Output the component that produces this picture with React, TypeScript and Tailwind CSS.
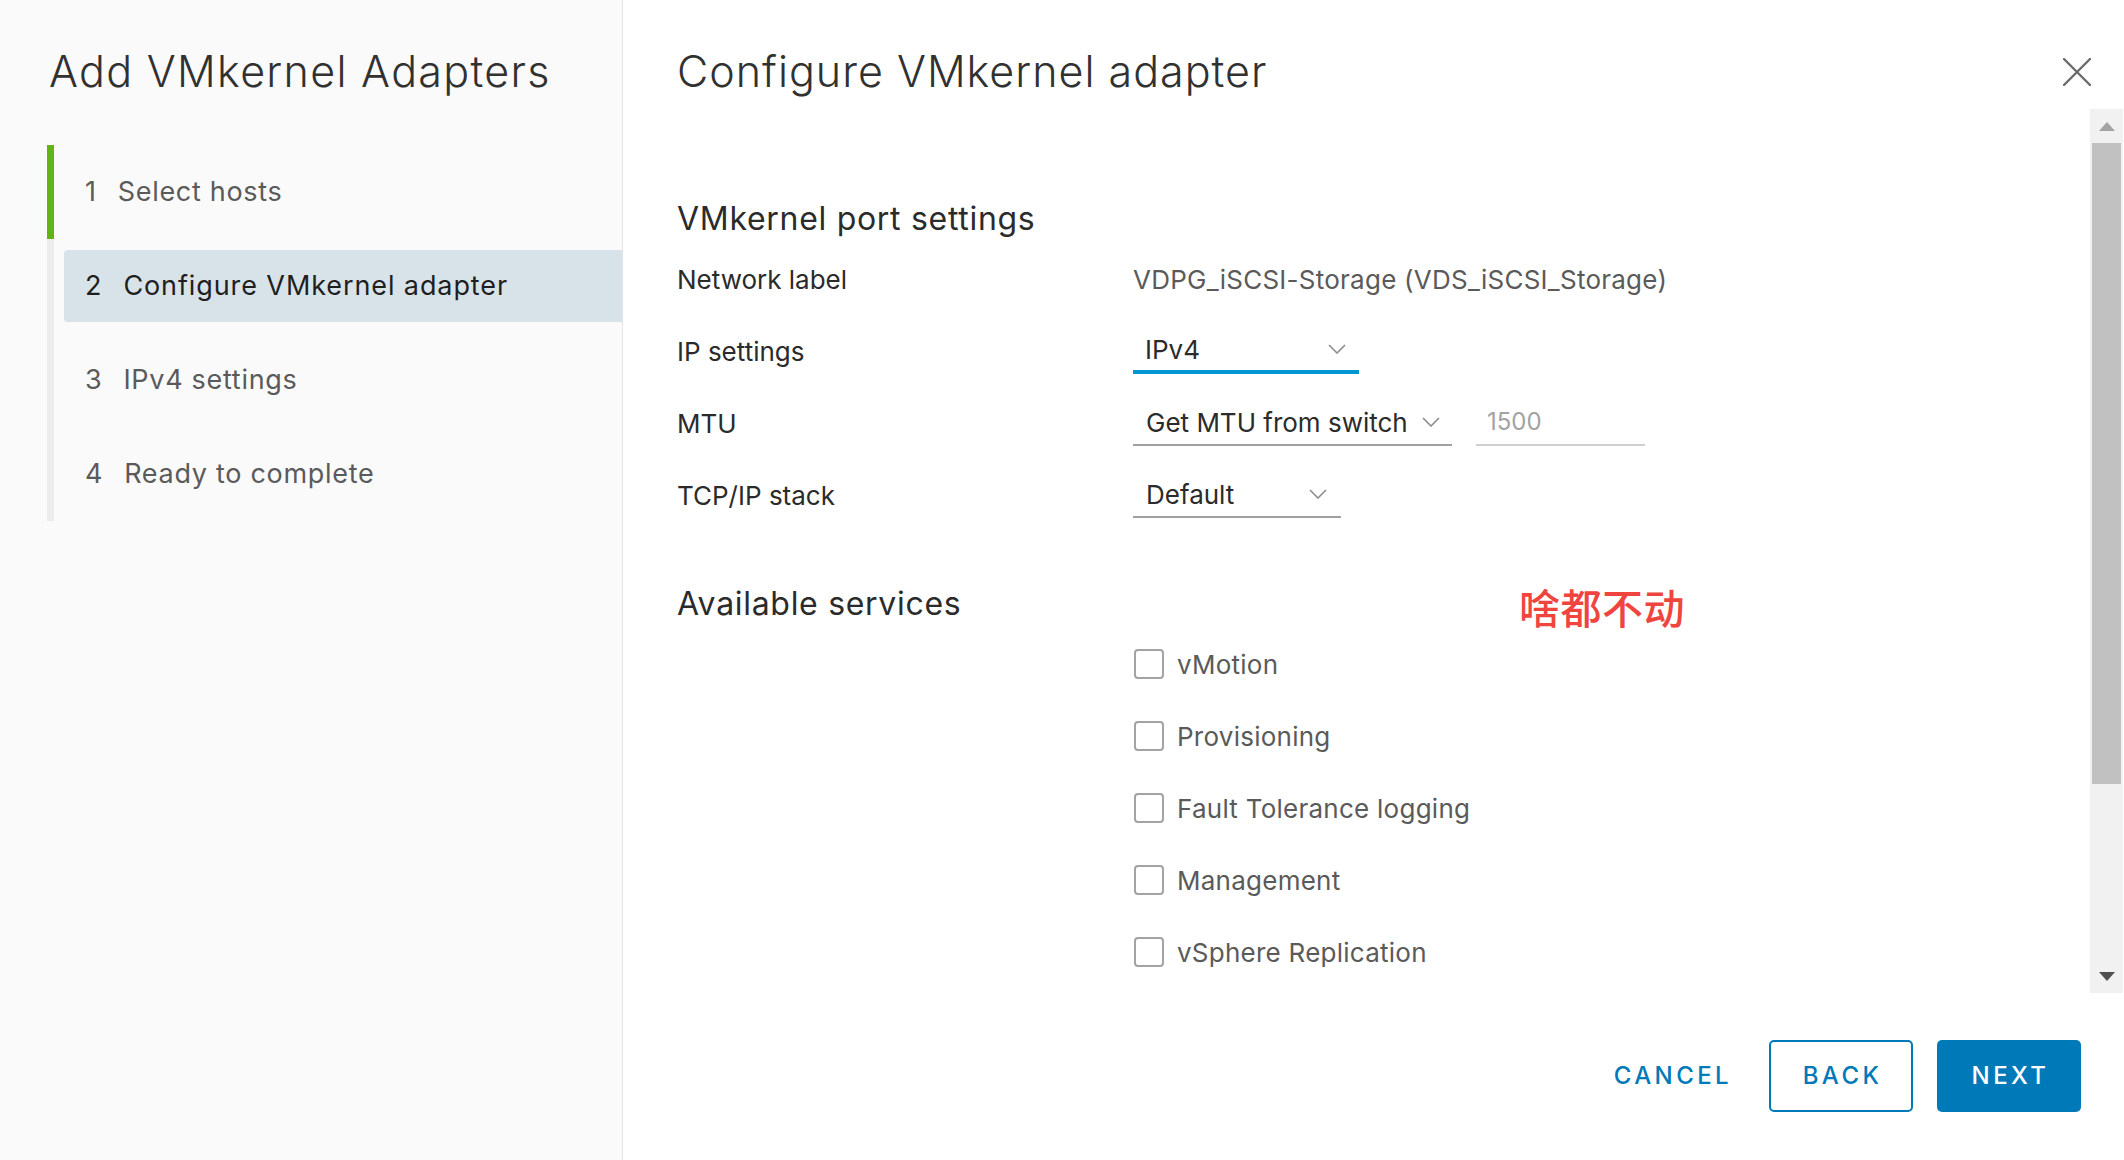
import React from "react";

const Chevron = () => (
  <svg width="18" height="10" viewBox="0 0 18 10" fill="none">
    <polyline points="1,1 9,9 17,1" stroke="#8c8c8c" strokeWidth="1.6" />
  </svg>
);

type StepState = "done" | "active" | "todo";

function Step({ n, label, state }: { n: number; label: string; state: StepState }) {
  return (
    <div className="flex h-[94px]">
      <div className={state === "done" ? "w-[7px] bg-[#60b515]" : "w-[7px] bg-[#ececec]"} />
      <div className="ml-[10px] flex-1 py-[11px]">
        <div
          className={
            state === "active"
              ? "flex h-[72px] items-center rounded-l-[4px] bg-[#d8e3e9] pl-[21px] text-[27px] tracking-[0.9px] text-[#1f1f1f]"
              : "flex h-[72px] items-center rounded-l-[4px] pl-[21px] text-[27px] tracking-[0.7px] text-[#5a5a5a]"
          }
        >
          <span>{n}</span>
          <span className="ml-[21px]">{label}</span>
        </div>
      </div>
    </div>
  );
}

function FormRow({ label, children }: { label: string; children: React.ReactNode }) {
  return (
    <div className="flex h-[72px] items-center">
      <div className="w-[456px] text-[26px] text-[#2b2b2b]">{label}</div>
      {children}
    </div>
  );
}

function Check({ label }: { label: string }) {
  return (
    <div className="flex h-[72px] items-center pl-[457px]">
      <div className="h-[30px] w-[30px] rounded-[4px] border-2 border-[#a3a3a3] bg-white" />
      <span className="ml-[13px] text-[26px] tracking-[0.25px] text-[#5a5a5a]">{label}</span>
    </div>
  );
}

export default function App() {
  return (
    <div className="flex h-[1160px] w-full overflow-hidden bg-white font-['Inter','Noto_Sans',sans-serif]">
      {/* Left panel */}
      <div className="flex h-full w-[623px] shrink-0 flex-col border-r border-[#e4e4e4] bg-[#fafafa]">
        <div className="pl-[49px] pt-[45px] text-[43px] font-light leading-[52px] tracking-[1.3px] text-[#313131]">
          Add VMkernel Adapters
        </div>
        <div className="mt-[48px] pl-[47px]">
          <Step n={1} label="Select hosts" state="done" />
          <Step n={2} label="Configure VMkernel adapter" state="active" />
          <Step n={3} label="IPv4 settings" state="todo" />
          <Step n={4} label="Ready to complete" state="todo" />
        </div>
      </div>

      {/* Right panel */}
      <div className="flex h-full flex-1 flex-col">
        {/* Header */}
        <div className="flex h-[109px] shrink-0 items-start justify-between">
          <div className="pl-[54px] pt-[45px] text-[43px] font-light leading-[52px] tracking-[1px] text-[#313131]">
            Configure VMkernel adapter
          </div>
          <div className="mr-[33px] mt-[58px]">
            <svg width="28" height="28" viewBox="0 0 28 28" fill="none">
              <line x1="1" y1="1" x2="27" y2="27" stroke="#6b6b6b" strokeWidth="2.4" strokeLinecap="round" />
              <line x1="27" y1="1" x2="1" y2="27" stroke="#6b6b6b" strokeWidth="2.4" strokeLinecap="round" />
            </svg>
          </div>
        </div>

        {/* Scroll area */}
        <div className="flex h-[884px] shrink-0">
          <div className="flex-1 overflow-hidden pl-[54px] pt-[86px]">
            <div className="flex h-[48px] items-center text-[32px] tracking-[0.7px] text-[#2b2b2b]">VMkernel port settings</div>

            <FormRow label="Network label">
              <div className="text-[26px] tracking-[0.25px] text-[#5a5a5a]">VDPG_iSCSI-Storage (VDS_iSCSI_Storage)</div>
            </FormRow>

            <FormRow label="IP settings">
              <div className="flex h-[46px] w-[226px] items-center justify-between border-b-4 border-[#0095d3] pl-[12px] pr-[13px] text-[26px] text-[#2b2b2b]">
                <span>IPv4</span>
                <Chevron />
              </div>
            </FormRow>

            <FormRow label="MTU">
              <div className="flex h-[46px] w-[319px] items-center justify-between border-b-2 border-[#a0a0a0] pl-[13px] pr-[12px] text-[26px] text-[#2b2b2b]">
                <span>Get MTU from switch</span>
                <Chevron />
              </div>
              <div className="ml-[24px] flex h-[46px] w-[169px] items-center border-b-2 border-[#d0d0d0] pl-[11px] text-[24px] text-[#a3a3a3]">
                1500
              </div>
            </FormRow>

            <FormRow label="TCP/IP stack">
              <div className="flex h-[46px] w-[208px] items-center justify-between border-b-2 border-[#a0a0a0] pl-[13px] pr-[14px] text-[26px] text-[#2b2b2b]">
                <span>Default</span>
                <Chevron />
              </div>
            </FormRow>

            <div className="mt-[49px] flex h-[48px] items-center">
              <div className="w-[842px] text-[32px] tracking-[0.7px] text-[#2b2b2b]">Available services</div>
              <div className="mt-[6px] font-['Noto_Sans_CJK_SC',sans-serif] text-[41px] font-medium tracking-[0.5px] text-[#f0443f]">
                啥都不动
              </div>
            </div>

            <Check label="vMotion" />
            <Check label="Provisioning" />
            <Check label="Fault Tolerance logging" />
            <Check label="Management" />
            <Check label="vSphere Replication" />
          </div>

          {/* Scrollbar */}
          <div className="mr-[1px] flex w-[33px] shrink-0 flex-col bg-[#f1f1f1]">
            <div className="flex h-[34px] items-center justify-center">
              <svg width="16" height="9" viewBox="0 0 16 9">
                <polygon points="0,9 16,9 8,0" fill="#a3a3a3" />
              </svg>
            </div>
            <div className="mx-[2px] h-[641px] bg-[#c1c1c1]" />
            <div className="flex-1" />
            <div className="flex h-[34px] items-center justify-center">
              <svg width="16" height="9" viewBox="0 0 16 9">
                <polygon points="0,0 16,0 8,9" fill="#505050" />
              </svg>
            </div>
          </div>
        </div>

        {/* Footer */}
        <div className="flex flex-1 items-start justify-end pr-[43px] pt-[47px]">
          <div className="flex h-[72px] items-center">
            <span className="text-[24px] font-medium tracking-[3.4px] text-[#0079b8]">CANCEL</span>
          </div>
          <div className="ml-[37px] flex h-[72px] w-[144px] items-center justify-center rounded-[5px] border-2 border-[#0079b8] bg-white text-[24px] font-medium tracking-[3.4px] text-[#0079b8]">
            <span className="pl-[3px]">BACK</span>
          </div>
          <div className="ml-[24px] flex h-[72px] w-[144px] items-center justify-center rounded-[5px] bg-[#0079b8] text-[24px] font-medium tracking-[3.4px] text-white">
            <span className="pl-[3px]">NEXT</span>
          </div>
        </div>
      </div>
    </div>
  );
}
